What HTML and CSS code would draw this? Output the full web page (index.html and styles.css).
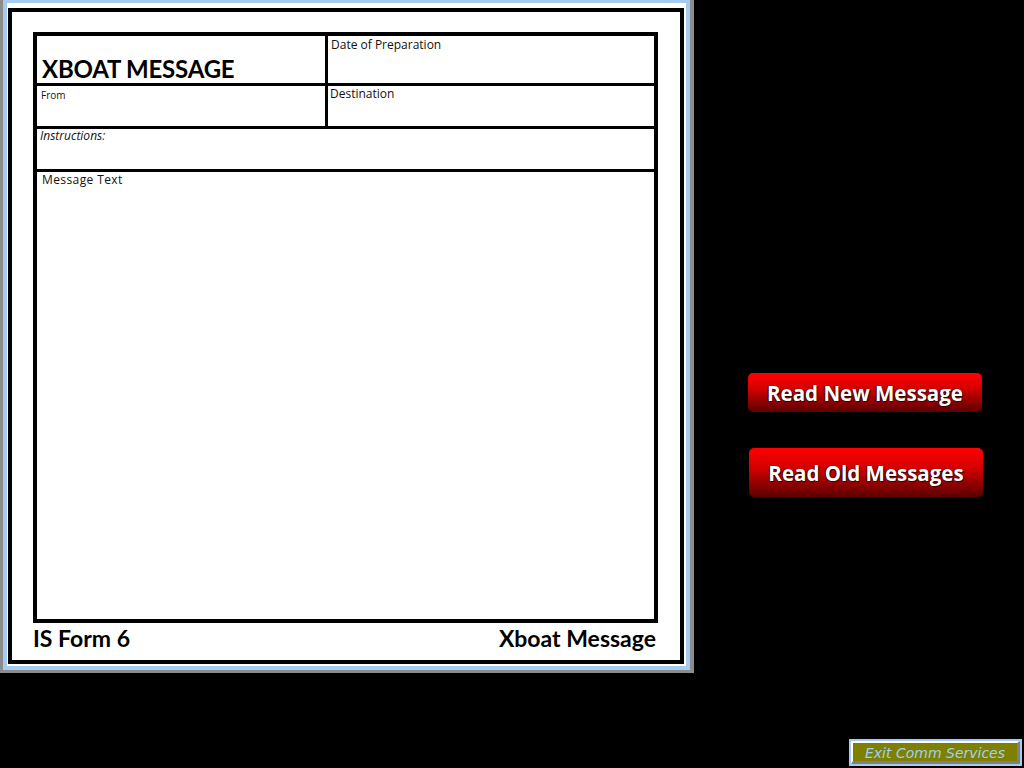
FILE: index.html
```html
<!DOCTYPE html>
<html>
<head>
<meta charset="utf-8">
<link rel="stylesheet" href="styles.css">
</head>
<body>
<div class="screen">
  <div class="window">
    <div class="frame">
      <div class="sheet">
        <div class="form">
          <div class="cell title-cell"><span class="title">XBOAT MESSAGE</span></div>
          <div class="cell"><span class="label">Date of Preparation</span></div>
          <div class="cell"><span class="label small">From</span></div>
          <div class="cell"><span class="label dest">Destination</span></div>
          <div class="cell wide"><span class="label italic">Instructions:</span></div>
          <div class="cell wide"><span class="label msg">Message Text</span></div>
        </div>
        <div class="footer">
          <span>IS Form 6</span>
          <span>Xboat Message</span>
        </div>
      </div>
    </div>
  </div>
  <div class="actions">
    <button class="red-btn first">Read New Message</button>
    <button class="red-btn second">Read Old Messages</button>
  </div>
  <div class="exit-area">
    <button class="exit-btn"><span>Exit Comm Services</span></button>
  </div>
</div>
</body>
</html>
```
FILE: styles.css
```css
html, body {
  margin: 0;
  padding: 0;
  background: #000;
}
.screen {
  width: 1024px;
  height: 768px;
  display: grid;
  grid-template-columns: 694px 1fr;
  grid-template-rows: 673px 1fr;
}
.window {
  grid-column: 1;
  grid-row: 1;
  box-sizing: border-box;
  border-left: 3px solid #8c8c8c;
  border-right: 4px solid #8c8c8c;
  border-bottom: 3px solid #8c8c8c;
  display: flex;
}
.frame {
  flex: 1;
  border-style: solid;
  border-color: #a6caf0;
  border-width: 3px 4px 4px 4px;
  background: #fff;
  padding: 5px 2px 2px 1px;
  display: flex;
}
.sheet {
  flex: 1;
  border: 4px solid #000;
  padding: 20px 22px 0 21px;
  display: flex;
  flex-direction: column;
}
.form {
  border: 4px solid #000;
  background: #000;
  display: grid;
  grid-template-columns: 288px 1fr;
  grid-template-rows: 47px 40px 40px 447px;
  gap: 3px;
}
.cell {
  background: #fff;
  display: flex;
  align-items: flex-start;
}
.wide {
  grid-column: 1 / 3;
}
.title-cell {
  align-items: flex-end;
}
.title {
  font-family: Lato, "Open Sans", sans-serif;
  font-weight: 700;
  font-size: 24px;
  line-height: 24px;
  color: #000;
  padding: 0 0 2px 5px;
  letter-spacing: -0.2px;
}
.label {
  font-family: "Open Sans", "DejaVu Sans", sans-serif;
  font-size: 12px;
  line-height: 14px;
  color: #111;
  padding: 2px 0 0 3px;
}
.small {
  font-size: 10px;
  padding: 2px 0 0 4px;
}
.dest {
  padding: 1px 0 0 2px;
}
.italic {
  font-style: italic;
  padding: 0 0 0 3px;
}
.msg {
  font-size: 12px;
  letter-spacing: 0.4px;
  padding: 1px 0 0 5px;
}
.footer {
  display: flex;
  justify-content: space-between;
  font-family: Lato, "Open Sans", sans-serif;
  font-weight: 700;
  font-size: 23px;
  line-height: 26px;
  color: #000;
  padding: 2px 2px 0 0;
}
.actions {
  grid-column: 2;
  grid-row: 1;
  display: flex;
  flex-direction: column;
  align-items: flex-start;
  padding: 373px 0 0 54px;
}
.red-btn {
  border: none;
  border-radius: 5px;
  width: 234px;
  background: linear-gradient(#ff0000 0%, #d40000 40%, #8e0000 75%, #5c0000 100%);
  color: #fff;
  font-family: "Open Sans", Lato, sans-serif;
  font-weight: 700;
  font-size: 20.5px;
  text-shadow: 1px 1px 1px #300, -1px 0 1px #400;
  padding: 0;
  cursor: pointer;
}
.first {
  height: 39px;
}
.second {
  margin: 36px 0 0 1px;
  height: 49px;
}
.exit-area {
  grid-column: 1 / 3;
  grid-row: 2;
  display: flex;
  justify-content: flex-end;
  align-items: flex-end;
  padding: 0 2px 2px 0;
}
.exit-btn {
  width: 173px;
  height: 27px;
  box-sizing: border-box;
  border: 2px solid #a6caf0;
  padding: 0;
  background: #a6caf0;
  display: flex;
}
.exit-btn span {
  flex: 1;
  border-style: solid;
  border-width: 2px 3px 3px 2px;
  border-color: #fff #808080 #808080 #fff;
  background: #808000;
  color: #9fd0f5;
  font-family: "DejaVu Sans", Verdana, sans-serif;
  font-style: italic;
  font-size: 14px;
  line-height: 20px;
  text-align: center;
}
```
